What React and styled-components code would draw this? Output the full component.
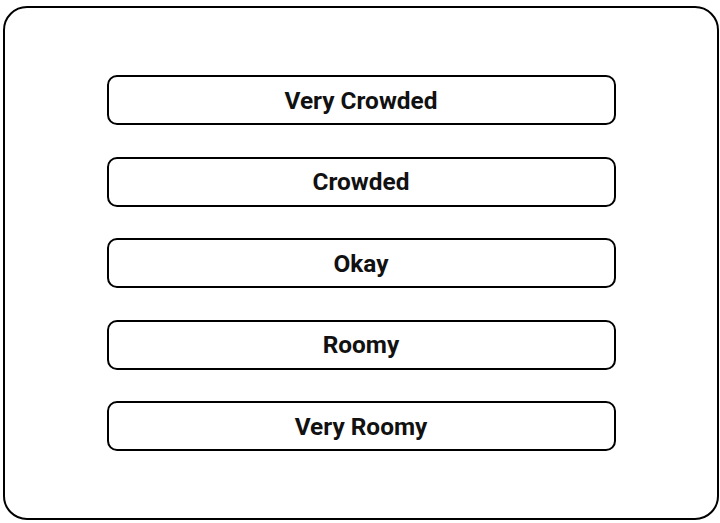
import React from 'react';
import styled, { createGlobalStyle } from 'styled-components';

const GlobalStyle = createGlobalStyle`
  body {
    margin: 0;
    background: #ffffff;
    font-family: Roboto, "Liberation Sans", sans-serif;
  }
`;

const Page = styled.div`
  padding: 6px 2px 4px 3px;
`;

const Panel = styled.div`
  box-sizing: border-box;
  width: 716px;
  height: 514px;
  border: 2px solid #000;
  border-radius: 24px;
  display: flex;
  flex-direction: column;
  align-items: center;
  justify-content: center;
  gap: 31.5px;
`;

const Choice = styled.button`
  box-sizing: border-box;
  width: 509px;
  height: 50px;
  border: 2px solid #000;
  border-radius: 10px;
  background: #fff;
  color: #111;
  font-family: Roboto, "Liberation Sans", sans-serif;
  font-weight: 700;
  font-size: 24.4px;
  padding: 0;
  cursor: pointer;
`;

const options = ['Very Crowded', 'Crowded', 'Okay', 'Roomy', 'Very Roomy'];

function App() {
  return (
    <>
      <GlobalStyle />
      <Page>
        <Panel>
          {options.map((label) => (
            <Choice key={label}>{label}</Choice>
          ))}
        </Panel>
      </Page>
    </>
  );
}

export default App;
